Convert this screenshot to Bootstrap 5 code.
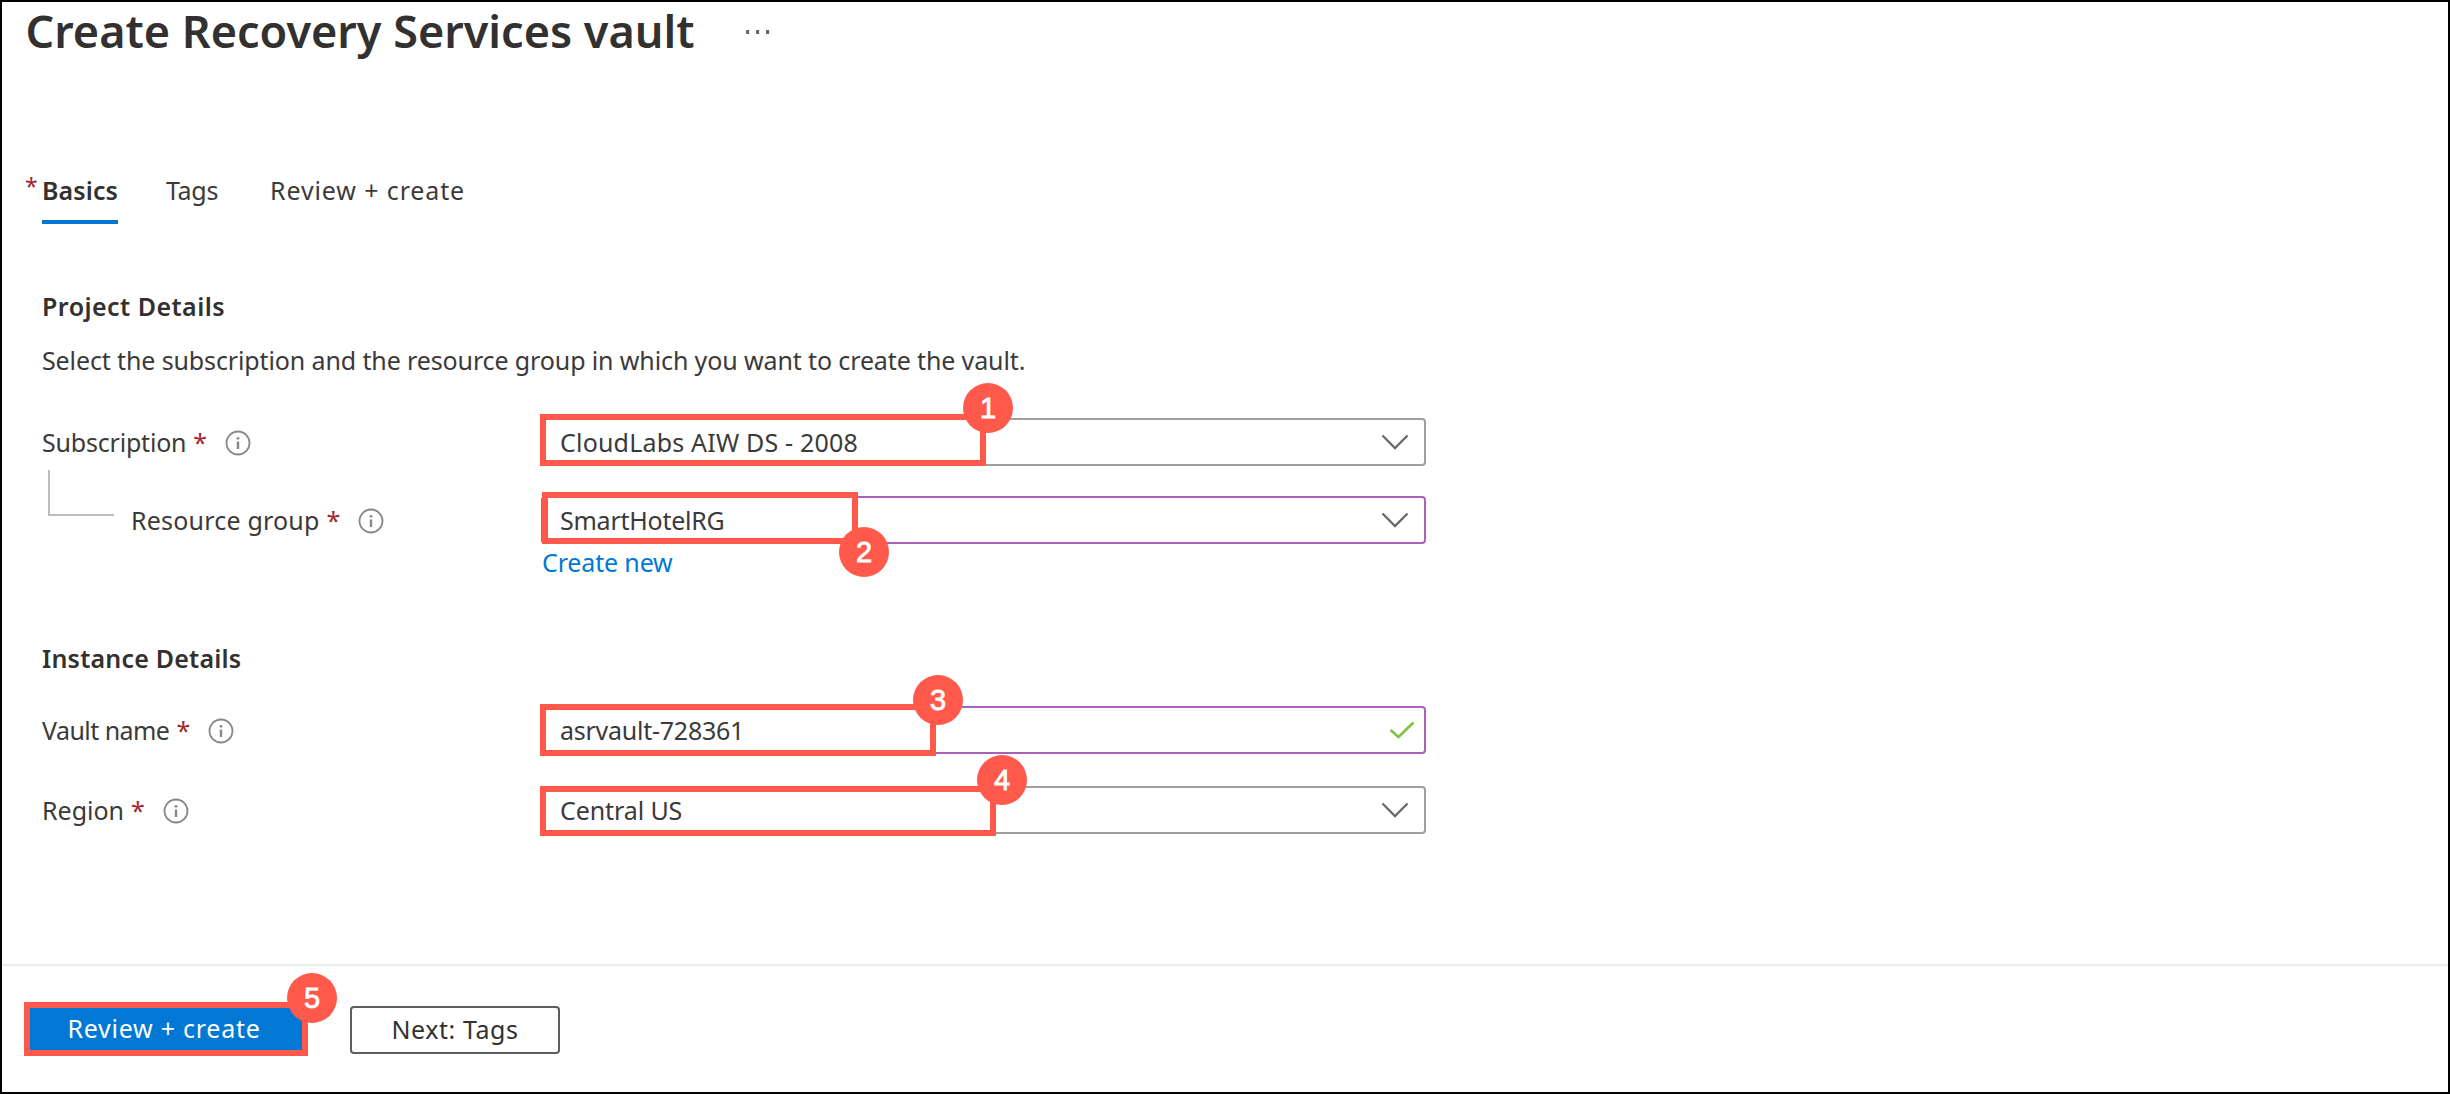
<!DOCTYPE html>
<html lang="en">
<head>
<meta charset="utf-8">
<title>Create Recovery Services vault</title>
<link href="https://cdn.jsdelivr.net/npm/bootstrap@5.3.0/dist/css/bootstrap.min.css" rel="stylesheet">
<style>
body{font-family:"Noto Sans","Open Sans",sans-serif;font-size:25px;line-height:32px;color:#3b3a39;background:#fff}
.page{width:2450px;height:1094px;border:2px solid #000}
.title-bar{height:172px;padding-left:23.5px}
.title-bar h1{font-size:45px;line-height:57px;font-weight:600;color:#323130;letter-spacing:-.01px}
.more{margin:28px 0 0 52px}
.tab-strip{height:50px;padding-left:40px}
.tab-strip .nav-link{padding:0;height:50px;color:inherit;border:0;border-radius:0;white-space:nowrap}
.tab-strip .nav-link.active{width:76px;border-bottom:4px solid #0078d4;color:#323130;font-weight:600;letter-spacing:.1px}
.tab-req{left:-17px;top:-4px;font-size:23px;font-weight:400}
.tab-tags{margin-left:48px;letter-spacing:-.3px}
.tab-review{margin-left:52px;letter-spacing:.87px}
.req{color:#a4262c}
.heading{font-size:25px;line-height:32px;font-weight:600;color:#323130;margin:0;padding-left:40px}
.h-project{margin-top:66px;letter-spacing:.45px}
.h-instance{margin-top:64px;letter-spacing:.2px}
.intro{margin:22px 0 42px;padding-left:40px;letter-spacing:-.12px}
.field-line{height:48px}
.label-col{width:538px;padding-left:40px}
.label-col .req{margin-left:7px;font-size:25px}
.label-col svg{margin:2px 0 0 18px}
.label-child{padding-left:129px}
.ctl-wrap{width:886px;height:48px}
.ctl{height:48px;margin-left:1px;border:2px solid #a19f9d;border-radius:4px;padding:0 15px 0 17px}
.edited{border-color:#a860b8}
.valid{padding-right:9px}
.callout{border:6px solid #ff594c}
.pin{width:50px;height:50px;border-radius:50%;background:#ff594c;color:#fff;font:29px/51px "Liberation Sans",sans-serif;text-align:center;-webkit-text-stroke:.8px #fff}
.box-1{left:0;top:-4px;width:446px;height:52px}.pin-1{left:423px;top:-35px}
.box-2{left:2px;top:-4px;width:316px;height:52px}.pin-2{left:299px;top:31px}
.box-3{left:0;top:-2px;width:396px;height:52px}.pin-3{left:373px;top:-31px}
.box-4{left:0;top:0;width:456px;height:50px}.pin-4{left:437px;top:-31px}
.pin-5{left:263px;top:-29px}
.elbow{width:66px;height:46px;left:46px;top:-26px;border:solid #bdbdbd;border-width:0 0 2px 2px}
.create-new{margin:2px 0 0 540px;height:32px}
.create-new a{color:#0078d4;letter-spacing:-.15px}
.foot{margin-top:130px;border-top:2px solid #edebe9;padding:36px 0 0 22px}
.foot .btn{font-size:25px;line-height:32px;padding:0 0 2px}
.foot .btn-review{width:284px;height:54px;border:6px solid #ff594c;border-radius:0;background:#0078d4!important;color:#fff;letter-spacing:.74px;padding-right:4px}
.btn-next{width:210px;height:48px;margin:4px 0 0 42px;border:2px solid #605e5c;border-radius:4px;color:#323130;letter-spacing:.57px}
</style>
<script src="https://cdn.jsdelivr.net/npm/bootstrap@5.3.0/dist/js/bootstrap.bundle.min.js"></script>
</head>
<body>
<svg class="d-none">
<symbol id="info" viewBox="0 0 26 26"><circle cx="13" cy="13" r="11.5" fill="none" stroke="#8a8886" stroke-width="1.8"/><path d="M13 11.5v7.5" stroke="#8a8886" stroke-width="2.4"/><circle cx="13" cy="8.3" r="1.4" fill="#8a8886"/></symbol>
<symbol id="chevron" viewBox="0 0 28 16"><path d="M1.5 1.5 14 14 26.500 1.500" fill="none" stroke="#6b6967" stroke-width="2.300"/></symbol>
</svg>
<main class="page d-flex flex-column">
<header class="title-bar d-flex align-items-start">
<h1 class="m-0 text-nowrap">Create Recovery Services vault</h1>
<svg class="more" width="24" height="4" fill="#6b6967"><path d="M0 0h3.200v4H0zM10 0h3.200v4H10zM20 0h3.200v4H20z"/></svg>
</header>
<nav class="nav tab-strip flex-nowrap">
<a class="nav-link active position-relative" href="#"><span class="req tab-req position-absolute">*</span>Basics</a>
<a class="nav-link tab-tags" href="#">Tags</a>
<a class="nav-link tab-review" href="#">Review + create</a>
</nav>
<h2 class="heading h-project">Project Details</h2>
<p class="intro">Select the subscription and the resource group in which you want to create the vault.</p>
<div class="field-line d-flex">
<div class="label-col d-flex align-items-center"><span style="letter-spacing:-.2px">Subscription</span><span class="req">*</span><svg width="26" height="26"><use href="#info"/></svg></div>
<div class="ctl-wrap position-relative">
<div class="ctl d-flex align-items-center justify-content-between"><span style="letter-spacing:.19px">CloudLabs AIW DS - 2008</span><svg width="28" height="16"><use href="#chevron"/></svg></div>
<div class="callout box-1 position-absolute"></div><div class="pin pin-1 position-absolute">1</div>
</div>
</div>
<div class="field-line d-flex" style="margin-top:30px">
<div class="label-col label-child d-flex align-items-center position-relative"><i class="elbow position-absolute"></i><span style="letter-spacing:.2px">Resource group</span><span class="req">*</span><svg width="26" height="26"><use href="#info"/></svg></div>
<div class="ctl-wrap position-relative">
<div class="ctl edited d-flex align-items-center justify-content-between"><span style="letter-spacing:-.25px">SmartHotelRG</span><svg width="28" height="16"><use href="#chevron"/></svg></div>
<div class="callout box-2 position-absolute"></div><div class="pin pin-2 position-absolute">2</div>
</div>
</div>
<div class="create-new"><a class="text-decoration-none" href="#">Create new</a></div>
<h2 class="heading h-instance">Instance Details</h2>
<div class="field-line d-flex" style="margin-top:32px">
<div class="label-col d-flex align-items-center"><span style="letter-spacing:-.55px">Vault name</span><span class="req">*</span><svg width="26" height="26"><use href="#info"/></svg></div>
<div class="ctl-wrap position-relative">
<div class="ctl edited valid d-flex align-items-center justify-content-between"><span style="letter-spacing:-.25px">asrvault-728361</span><svg width="26" height="18" viewBox="0 0 26 18"><path d="M1.500 9 9.500 16 24.500 1.500" fill="none" stroke="#7fc241" stroke-width="2.600"/></svg></div>
<div class="callout box-3 position-absolute"></div><div class="pin pin-3 position-absolute">3</div>
</div>
</div>
<div class="field-line d-flex" style="margin-top:32px">
<div class="label-col d-flex align-items-center"><span style="letter-spacing:0">Region</span><span class="req">*</span><svg width="26" height="26"><use href="#info"/></svg></div>
<div class="ctl-wrap position-relative">
<div class="ctl d-flex align-items-center justify-content-between"><span style="letter-spacing:-.1px">Central US</span><svg width="28" height="16"><use href="#chevron"/></svg></div>
<div class="callout box-4 position-absolute"></div><div class="pin pin-4 position-absolute">4</div>
</div>
</div>
<footer class="foot d-flex align-items-start">
<div class="position-relative"><button type="button" class="btn btn-primary btn-review d-block">Review + create</button><div class="pin pin-5 position-absolute">5</div></div>
<button type="button" class="btn btn-next bg-white">Next: Tags</button>
</footer>
</main>
</body>
</html>
